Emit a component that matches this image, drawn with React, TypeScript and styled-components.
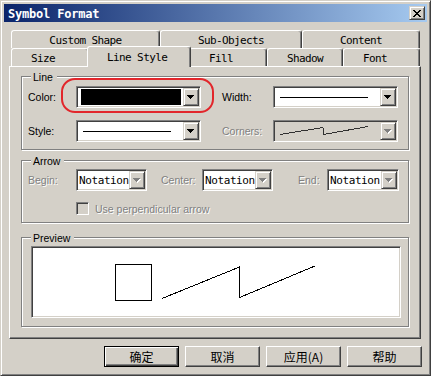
import React from "react";
import styled, { createGlobalStyle, css } from "styled-components";

const FACE = "#d4d0c8";
const SHADOW = "#808080";
const DARK = "#404040";

const GlobalStyle = createGlobalStyle`
  html, body { margin: 0; padding: 0; background: ${FACE}; }
  body { font-family: "Liberation Sans", Arial, sans-serif; }
  *, *::before, *::after { box-sizing: border-box; }
`;

const Dialog = styled.div`
  width: 431px;
  height: 376px;
  background: ${FACE};
  border: 1px solid;
  border-color: ${FACE} ${DARK} ${DARK} ${FACE};
  box-shadow: inset 1px 1px 0 #fff, inset -1px -1px 0 ${SHADOW};
  padding: 3px;
  display: flex;
  flex-direction: column;
`;

const TitleBar = styled.div`
  height: 18px;
  flex: none;
  display: flex;
  align-items: center;
  justify-content: space-between;
  padding: 0 2px;
  background: linear-gradient(to right, #0a246a, #a6caf0);
`;

const TitleText = styled.span`
  color: #fff;
  font: bold 12px "DejaVu Sans Mono", monospace;
  letter-spacing: -0.2px;
  padding-left: 2px;
  padding-top: 1px;
  white-space: nowrap;
`;

const CloseButton = styled.div`
  width: 16px;
  height: 14px;
  background: ${FACE};
  border: 1px solid;
  border-color: ${FACE} ${DARK} ${DARK} ${FACE};
  box-shadow: inset 1px 1px 0 #fff, inset -1px -1px 0 ${SHADOW};
  display: flex;
  align-items: center;
  justify-content: center;
  padding-right: 1px;
`;

const Body = styled.div`
  padding: 8px 6px 0 5px;
  display: flex;
  flex-direction: column;
`;

const TabRow = styled.div`
  display: flex;
  align-items: flex-start;
  height: 18px;
  margin-left: 2px;
`;

const Tab = styled.div<{ $w: number; $centered?: boolean; $selected?: boolean }>`
  flex: none;
  width: ${(p) => p.$w}px;
  height: 18px;
  background: ${FACE};
  border-top: 1px solid #fff;
  border-left: 1px solid #fff;
  border-right: 1px solid ${DARK};
  border-radius: 3px 3px 0 0;
  box-shadow: inset -1px 0 0 ${SHADOW};
  font: 11px "DejaVu Sans Mono", monospace;
  letter-spacing: -0.6px;
  color: #000;
  white-space: nowrap;
  display: flex;
  align-items: center;
  justify-content: ${(p) => (p.$centered ? "center" : "flex-start")};
  padding: 2px 0 0 ${(p) => (p.$centered ? 0 : 19)}px;
  ${(p) =>
    p.$selected &&
    css`
      height: 21px;
      margin: -2px -2px -1px;
      position: relative;
      z-index: 1;
      padding-top: 0;
    `}
`;

const Panel = styled.div`
  width: 412px;
  height: 273px;
  flex: none;
  border: 1px solid;
  border-color: #fff ${DARK} ${DARK} #fff;
  box-shadow: inset -1px -1px 0 ${SHADOW};
  padding: 9px 0 0 11px;
  display: flex;
  flex-direction: column;
  align-items: flex-start;
`;

const Group = styled.div<{ $h: number; $mt?: number; $pad: string }>`
  position: relative;
  flex: none;
  width: 388px;
  height: ${(p) => p.$h}px;
  margin-top: ${(p) => p.$mt ?? 0}px;
  border: 1px solid ${SHADOW};
  box-shadow: 1px 1px 0 #fff, inset 1px 1px 0 #fff;
  padding: ${(p) => p.$pad};
  display: flex;
  flex-direction: column;
  align-items: flex-start;
`;

const Legend = styled.span`
  position: absolute;
  top: -6px;
  left: 9px;
  padding: 0 4px 0 2px;
  background: ${FACE};
  font-size: 10.5px;
  line-height: 12px;
  color: #000;
`;

const FieldRow = styled.div<{ $mt?: number }>`
  display: flex;
  align-items: center;
  height: 22px;
  margin-top: ${(p) => p.$mt ?? 0}px;
`;

const Label = styled.span<{ $w: number; $ml?: number; $disabled?: boolean }>`
  flex: none;
  width: ${(p) => p.$w}px;
  margin-left: ${(p) => p.$ml ?? 0}px;
  font-size: 10.5px;
  white-space: nowrap;
  color: ${(p) => (p.$disabled ? SHADOW : "#000")};
  text-shadow: ${(p) => (p.$disabled ? "1px 1px 0 #fff" : "none")};
`;

const Highlight = styled.div`
  position: relative;
  display: flex;
  &::after {
    content: "";
    position: absolute;
    left: -15px;
    right: -13px;
    top: -8px;
    bottom: -5px;
    border: 2px solid #e2262b;
    border-radius: 14px;
    pointer-events: none;
  }
`;

const Combo = styled.div<{ $w: number; $disabled?: boolean }>`
  flex: none;
  width: ${(p) => p.$w}px;
  height: 22px;
  display: flex;
  border: 1px solid;
  border-color: ${SHADOW} #fff #fff ${SHADOW};
  box-shadow: inset 1px 1px 0 ${DARK}, inset -1px -1px 0 ${FACE};
  padding: 1px;
  background: ${(p) => (p.$disabled ? FACE : "#fff")};
`;

const ComboField = styled.div`
  flex: 1;
  min-width: 0;
  overflow: hidden;
  display: flex;
  align-items: center;
`;

const ColorSwatch = styled.div`
  flex: 1;
  align-self: stretch;
  margin: 1px 2px 1px 3px;
  background: #000;
`;

const LineSample = styled.div`
  width: 88px;
  height: 1px;
  margin-left: 5px;
  background: #000;
`;

const ComboText = styled.span`
  font: 11px "DejaVu Sans Mono", monospace;
  letter-spacing: -0.4px;
  color: #000;
  white-space: nowrap;
  padding-left: 1px;
`;

const DropButton = styled.div`
  flex: none;
  width: 16px;
  height: 100%;
  background: ${FACE};
  border: 1px solid;
  border-color: ${FACE} ${DARK} ${DARK} ${FACE};
  box-shadow: inset 1px 1px 0 #fff, inset -1px -1px 0 ${SHADOW};
  display: flex;
  align-items: center;
  justify-content: center;
`;

const CheckRow = styled.div`
  display: flex;
  align-items: center;
  margin-top: 11px;
  padding-left: 48px;
`;

const CheckBox = styled.div`
  flex: none;
  width: 13px;
  height: 13px;
  border: 1px solid;
  border-color: ${SHADOW} #fff #fff ${SHADOW};
  box-shadow: inset 1px 1px 0 ${DARK}, inset -1px -1px 0 ${FACE};
  background: ${FACE};
`;

const CheckLabel = styled.span`
  margin-left: 6px;
  font-size: 10.5px;
  color: ${SHADOW};
  text-shadow: 1px 1px 0 #fff;
  white-space: nowrap;
`;

const PreviewBox = styled.div`
  width: 370px;
  height: 72px;
  border: 1px solid;
  border-color: ${SHADOW} #fff #fff ${SHADOW};
  box-shadow: inset 1px 1px 0 ${DARK}, inset -1px -1px 0 ${FACE};
  padding: 1px;
  background: #fff;
  svg { display: block; }
`;

const ButtonRow = styled.div`
  display: flex;
  justify-content: flex-end;
  gap: 6px;
  margin-top: 7px;
  margin-right: -1px;
`;

const Button = styled.button<{ $default?: boolean }>`
  width: 75px;
  height: 21px;
  padding: 0;
  font: 12px "Noto Sans CJK SC", sans-serif;
  line-height: 1;
  color: #000;
  background: ${FACE};
  border: 1px solid;
  border-color: #fff ${DARK} ${DARK} #fff;
  box-shadow: inset -1px -1px 0 ${SHADOW};
  ${(p) =>
    p.$default &&
    css`
      border-color: #000;
      box-shadow: inset 1px 1px 0 #fff, inset -1px -1px 0 ${DARK}, inset -2px -2px 0 ${SHADOW};
    `}
`;

const Arrow = ({ disabled }: { disabled?: boolean }) => {
  const d = "M0 0h7v1H0zM1 1h5v1H1zM2 2h3v1H2zM3 3h1v1H3z";
  return (
    <svg width="8" height="5" viewBox="0 0 8 5" shapeRendering="crispEdges">
      {disabled && <path d={d} fill="#fff" transform="translate(1 1)" />}
      <path d={d} fill={disabled ? SHADOW : "#000"} />
    </svg>
  );
};

const CloseGlyph = () => (
  <svg width="8" height="7" viewBox="0 0 8 7" shapeRendering="crispEdges">
    <path
      d="M0 0h2v1H0zM6 0h2v1H6zM1 1h2v1H1zM5 1h2v1H5zM2 2h4v1H2zM3 3h2v1H3zM2 4h4v1H2zM1 5h2v1H1zM5 5h2v1H5zM0 6h2v1H0zM6 6h2v1H6z"
      fill="#000"
    />
  </svg>
);

const NotationCombo = ({ w }: { w: number }) => (
  <Combo $w={w}>
    <ComboField>
      <ComboText>Notation</ComboText>
    </ComboField>
    <DropButton>
      <Arrow disabled />
    </DropButton>
  </Combo>
);

export default function App() {
  return (
    <>
      <GlobalStyle />
      <Dialog>
        <TitleBar>
          <TitleText>Symbol Format</TitleText>
          <CloseButton>
            <CloseGlyph />
          </CloseButton>
        </TitleBar>
        <Body>
          <TabRow>
            <Tab $w={149} $centered>Custom Shape</Tab>
            <Tab $w={142} $centered>Sub-Objects</Tab>
            <Tab $w={118} $centered>Content</Tab>
          </TabRow>
          <TabRow>
            <Tab $w={78}>Size</Tab>
            <Tab $w={104} $selected>Line Style</Tab>
            <Tab $w={78}>Fill</Tab>
            <Tab $w={76}>Shadow</Tab>
            <Tab $w={77}>Font</Tab>
          </TabRow>
          <Panel>
            <Group $h={74} $pad="9px 0 0 6px">
              <Legend>Line</Legend>
              <FieldRow>
                <Label $w={48}>Color:</Label>
                <Highlight>
                  <Combo $w={125}>
                    <ComboField>
                      <ColorSwatch />
                    </ComboField>
                    <DropButton>
                      <Arrow />
                    </DropButton>
                  </Combo>
                </Highlight>
                <Label $w={51} $ml={21}>Width:</Label>
                <Combo $w={125}>
                  <ComboField>
                    <LineSample />
                  </ComboField>
                  <DropButton>
                    <Arrow />
                  </DropButton>
                </Combo>
              </FieldRow>
              <FieldRow $mt={12}>
                <Label $w={48}>Style:</Label>
                <Combo $w={125}>
                  <ComboField>
                    <LineSample />
                  </ComboField>
                  <DropButton>
                    <Arrow />
                  </DropButton>
                </Combo>
                <Label $w={51} $ml={21} $disabled>Corners:</Label>
                <Combo $w={125} $disabled>
                  <ComboField>
                    <svg width="100" height="18" viewBox="0 0 100 18" shapeRendering="crispEdges">
                      <polyline
                        points="5,12.5 48,5.5 48.5,12.5 93,4.5"
                        fill="none"
                        stroke="#303030"
                        strokeWidth="1"
                      />
                    </svg>
                  </ComboField>
                  <DropButton>
                    <Arrow disabled />
                  </DropButton>
                </Combo>
              </FieldRow>
            </Group>
            <Group $h={63} $mt={10} $pad="8px 0 0 6px">
              <Legend>Arrow</Legend>
              <FieldRow>
                <Label $w={48} $disabled>Begin:</Label>
                <NotationCombo w={71} />
                <Label $w={41} $ml={14} $disabled>Center:</Label>
                <NotationCombo w={71} />
                <Label $w={29} $ml={25} $disabled>End:</Label>
                <NotationCombo w={72} />
              </FieldRow>
              <CheckRow>
                <CheckBox />
                <CheckLabel>Use perpendicular arrow</CheckLabel>
              </CheckRow>
            </Group>
            <Group $h={90} $mt={14} $pad="8px 0 0 9px">
              <Legend>Preview</Legend>
              <PreviewBox>
                <svg width="366" height="68" viewBox="0 0 366 68">
                  <rect x="82.5" y="16.5" width="36" height="36" fill="none" stroke="#000" strokeWidth="1" />
                  <polyline
                    points="129,50.5 206.5,19 206.5,49.5 282,18"
                    fill="none"
                    stroke="#000"
                    strokeWidth="1"
                    shapeRendering="crispEdges"
                  />
                </svg>
              </PreviewBox>
            </Group>
          </Panel>
          <ButtonRow>
            <Button $default>确定</Button>
            <Button>取消</Button>
            <Button>应用(A)</Button>
            <Button>帮助</Button>
          </ButtonRow>
        </Body>
      </Dialog>
    </>
  );
}
